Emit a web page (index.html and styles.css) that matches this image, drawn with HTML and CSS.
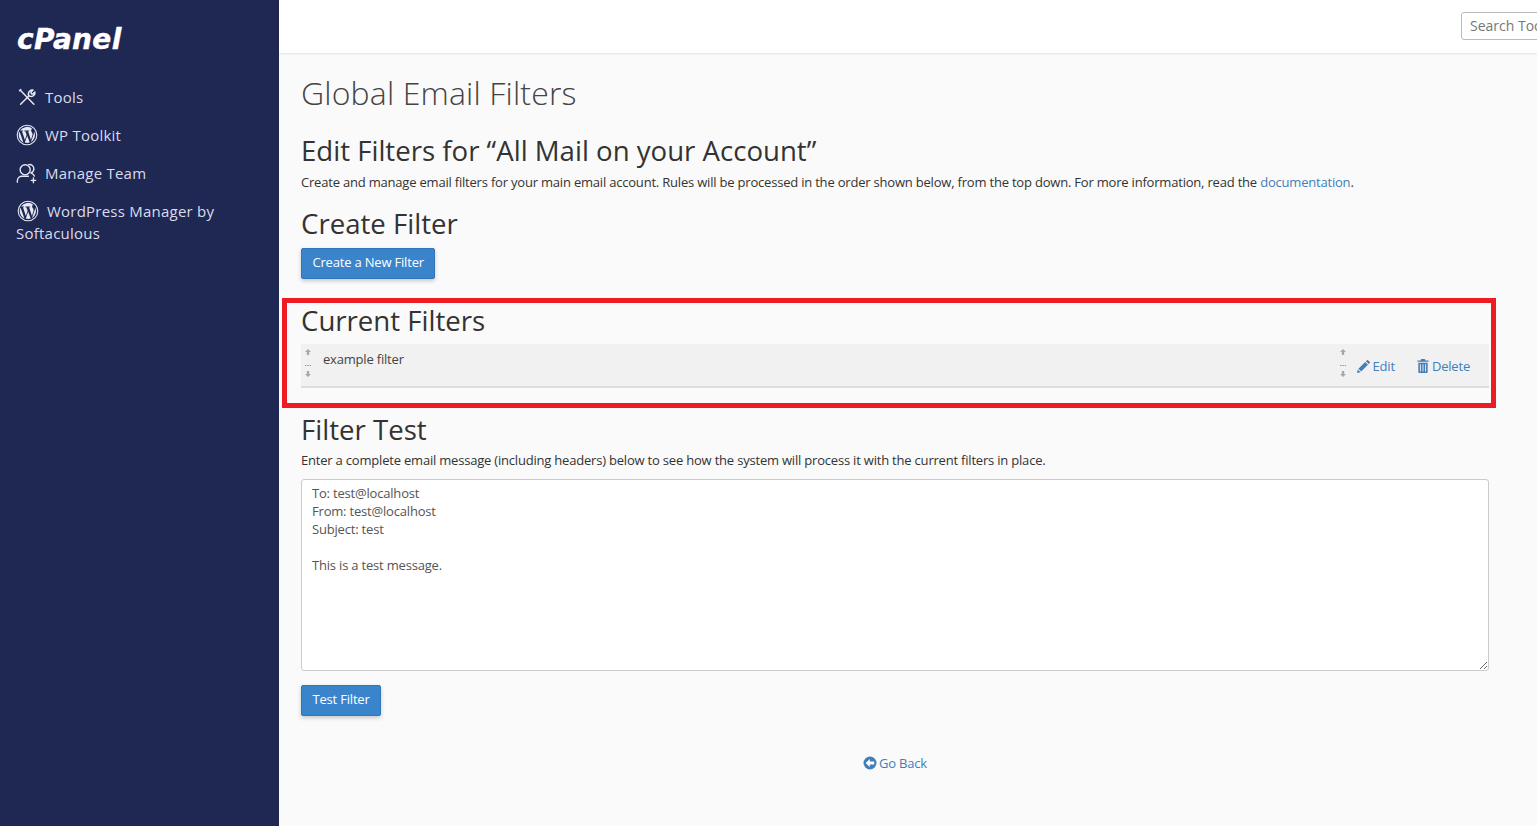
FILE: index.html
```html
<!DOCTYPE html>
<html lang="en">
<head>
<meta charset="utf-8">
<title>Global Email Filters</title>
<link rel="stylesheet" href="styles.css">
</head>
<body>
<div class="app">
  <aside class="sidebar">
    <div class="logo">cPanel</div>
    <nav class="nav">
      <a class="nav-item"><svg class="nav-icon" viewBox="0 0 24 24" fill="none" stroke="#e6e8f2" stroke-width="1.600" stroke-linecap="round" stroke-linejoin="round"><path d="M5 20 14 11"/><path d="M14 11c-1-2.300-.5-4.300 1-5.600 1-.9 2.300-1.200 3.500-1l-2.200 2.300.4 1.700 1.700.4 2.200-2.200c.3 1.300-.1 2.600-1 3.500-1.200 1.200-3 1.600-4.600.9"/><path d="M5 5 19.500 20"/><path d="M3.800 5.200 5.200 3.800"/></svg><span>Tools</span></a>
      <a class="nav-item"><svg class="nav-icon" viewBox="0 0 24 24"><use href="#wp"/></svg><span>WP Toolkit</span></a>
      <a class="nav-item"><svg class="nav-icon" viewBox="0 0 24 24" fill="none" stroke="#e6e8f2" stroke-width="1.500" stroke-linecap="round"><circle cx="10" cy="8.500" r="5.500"/><path d="M1.500 22v-1.500c0-3 2.500-5 5-5h7"/><path d="M14 2.800c3-.5 5.500 1.500 5.500 4.500 0 2-1.200 3.700-3 4.500 1.500.8 3 1.800 3.500 3.500"/><path d="M19 17.500v5M16.500 20h5"/></svg><span>Manage Team</span></a>
      <a class="nav-item wrap"><svg class="nav-icon shifted" viewBox="0 0 24 24"><use href="#wp"/></svg><span>WordPress Manager by Softaculous</span></a>
    </nav>
  </aside>
  <div class="main">
    <header class="topbar">
      <div class="search">Search Tools</div>
    </header>
    <main class="content">
      <h1 class="page-title">Global Email Filters</h1>
      <h2 class="heading first">Edit Filters for “All Mail on your Account”</h2>
      <p class="text">Create and manage email filters for your main email account. Rules will be processed in the order shown below, from the top down. For more information, read the <a class="link">documentation</a>.</p>
      <h2 class="heading create">Create Filter</h2>
      <button class="btn">Create a New Filter</button>
      <h2 class="heading current">Current Filters</h2>
      <div class="filter-row">
        <div class="grip"><svg viewBox="0 0 8 30"><use href="#grip"/></svg></div>
        <div class="filter-name">example filter</div>
        <div class="filter-actions">
          <div class="grip"><svg viewBox="0 0 8 30"><use href="#grip"/></svg></div>
          <a class="action edit"><svg class="action-icon" viewBox="0 0 14 14"><path fill="#437eb9" d="M0 14l.8-3.800 3 3zM1.500 9.500 8.800 2.200l3 3-7.300 7.300zM9.600 1.400 10.800.2c.3-.3.700-.3 1 0l2 2c.3.3.3.700 0 1l-1.200 1.200z"/></svg>Edit</a>
          <a class="action"><svg class="action-icon trash" viewBox="0 0 12 15"><path fill="#437eb9" d="M4 0h4l.7 1.500H12v1.500H0V1.500h3.300zM1 4h10v10c0 .6-.4 1-1 1H2c-.6 0-1-.4-1-1zm1.700 1.500v8h1v-8zm2.800 0v8h1v-8zm2.800 0v8h1v-8z"/></svg>Delete</a>
        </div>
      </div>
      <h2 class="heading test">Filter Test</h2>
      <p class="text test-text">Enter a complete email message (including headers) below to see how the system will process it with the current filters in place.</p>
      <textarea class="message" spellcheck="false">To: test@localhost
From: test@localhost
Subject: test

This is a test message.</textarea>
      <button class="btn test-btn">Test Filter</button>
      <div class="back"><a class="link back-link"><svg class="back-icon" viewBox="0 0 14 14"><circle cx="7" cy="7" r="6.500" fill="#437eb9"/><path fill="#fff" d="M2.700 7 6.800 3v2.500h4.400v3H6.800V11z"/></svg>Go Back</a></div>
    </main>
  </div>
</div>
<div class="highlight"></div>
<svg class="defs" width="0" height="0">
  <defs>
    <symbol id="wp" viewBox="0 0 24 24">
      <circle cx="12" cy="12" r="10.700" fill="none" stroke="#e6e8f2" stroke-width="1.200"/>
      <path fill="#e6e8f2" d="M3 12c0 3.600 2.100 6.700 5.100 8.100L3.800 8.300C3.300 9.500 3 10.700 3 12zm15.100-.5c0-1.100-.4-1.900-.7-2.500-.5-.7-.9-1.300-.9-2 0-.8.600-1.500 1.400-1.500h.1A9 9 0 0 0 4.400 7.200h.6c.9 0 2.400-.1 2.400-.1.500 0 .5.700.1.800 0 0-.5.100-1 .1l3.200 9.400 1.900-5.700-1.400-3.700c-.5 0-.9-.1-.9-.1-.5 0-.4-.8.100-.8 0 0 1.500.1 2.300.1.900 0 2.400-.1 2.400-.1.500 0 .5.700.1.800 0 0-.5.100-1 .1l3.100 9.400.9-2.900c.4-1.200.7-2.100.7-2.900zm-5.900 1.300-2.600 7.500a9 9 0 0 0 5.500-.1l-.1-.1zm7.400-4.900.1.900c0 .9-.2 1.900-.7 3.200l-2.700 7.800A9 9 0 0 0 19.600 7.900z"/>
    </symbol>
    <symbol id="grip" viewBox="0 0 8 30">
      <path fill="#a8a8a8" d="M4 1 7 4H5.200V7H2.800V4H1zM4 29 1 26H2.800V23H5.200V26H7z"/>
      <path fill="#777" d="M1 17h.8v1H1zM2.700 17h.8v1h-.8zM4.400 17h.8v1h-.8zM6.100 17h.8v1h-.8z"/>
    </symbol>
  </defs>
</svg>
</body>
</html>
```
FILE: styles.css
```css
* { box-sizing: border-box; }
html, body { margin: 0; height: 100%; overflow: hidden; }
body { font-family: "Open Sans", sans-serif; font-size: 13px; letter-spacing: -.19px; color: #333; background: #fafafa; }
.app { display: flex; height: 826px; }
.sidebar { flex: 0 0 279px; background: #1f2753; color: #d9dcec; }
.logo { font-family: "DejaVu Sans", sans-serif; font-weight: 700; font-style: italic; font-size: 28px; line-height: 30px; letter-spacing: .3px; color: #fff; -webkit-text-stroke: .4px #fff; padding: 25px 0 0 17px; height: 79px; }
.nav { display: flex; flex-direction: column; }
.nav-item { display: block; padding: 7px 16px 9px; font-size: 15px; line-height: 22px; letter-spacing: .23px; height: 38px; color: #d9dcec; }
.nav-item.wrap { height: auto; }
.nav-icon { width: 22px; height: 22px; margin-right: 7px; vertical-align: -5px; display: inline-block; }
.nav-icon.shifted { margin-left: 1px; margin-right: 8px; }
.main { flex: 1; min-width: 0; display: flex; flex-direction: column; }
.topbar { height: 53px; flex: none; background: #fff; box-shadow: 0 1px 2px rgba(0,0,0,.1); display: flex; justify-content: flex-end; overflow: hidden; }
.search { width: 120px; margin: 12px -44px 0 0; height: 28px; border: 1px solid #bbb; border-radius: 3px; padding: 0 8px; font-size: 14px; letter-spacing: 0; line-height: 26px; color: #777; white-space: nowrap; background: #fff; flex: none; }
.content { padding: 0 48px 0 22px; flex: 1; }
.page-title { font-size: 32px; line-height: 40px; font-weight: 300; margin: 20px 0 0; color: #444; letter-spacing: .15px; }
.heading { font-size: 27.600px; line-height: 32px; padding-bottom: 2px; font-weight: 400; letter-spacing: 0; margin: 0; color: #333; }
.heading.first { margin-top: 21px; }
.heading.create { margin-top: 16px; }
.heading.current { margin-top: 25px; }
.heading.test { margin-top: 25px; }
.text { margin: 5px 0 0; line-height: 18px; letter-spacing: -.2px; }
.text.test-text { margin-top: 4px; }
.create + .btn { margin-top: 7px; }
.link { color: #437eb9; }
.btn { display: block; height: 31px; padding: 0 10.500px 2px; background: #3a84cc; border: 1px solid #3276b8; border-radius: 2px; color: #fff; font: 400 13px/27px "Open Sans", sans-serif; letter-spacing: -.19px; box-shadow: 0 2px 4px rgba(0,0,0,.2); }
.filter-row { margin-top: 6px; height: 44px; background: #f1f1f1; border-bottom: 2px solid #ddd; display: flex; position: relative; }
.grip { width: 8px; height: 30px; flex: none; margin-top: 4px; }
.grip svg { width: 8px; height: 30px; display: block; }
.filter-row > .grip { margin-left: 3px; }
.filter-name { margin: 6px 0 0 11px; line-height: 18px; color: #444; flex: 1; }
.filter-actions { display: flex; align-items: flex-start; padding-right: 19px; }
.action { color: #437eb9; line-height: 18px; margin-top: 13px; margin-left: 22px; white-space: nowrap; }
.action.edit { margin-left: 10px; }
.action-icon { width: 13px; height: 13px; margin-right: 3px; vertical-align: -2px; }
.action-icon.trash { width: 12px; height: 14px; vertical-align: -2px; }
.message { display: block; width: 100%; height: 192px; margin-top: 10px; padding: 4px 10px; border: 1px solid #ccc; border-radius: 3px; background: #fff; font: 400 13px/18px "Open Sans", sans-serif; letter-spacing: -.19px; color: #555; resize: both; outline: none; }
.test-btn { margin-top: 14px; }
.back { text-align: center; margin-top: 38px; line-height: 18px; }
.back-link { white-space: nowrap; }
.back-icon { width: 14px; height: 14px; margin-right: 2px; vertical-align: -2px; }
.highlight { position: absolute; left: 282px; top: 298px; width: 1214px; height: 110px; border: 5px solid #ed1c24; pointer-events: none; }
.defs { position: absolute; }
```
